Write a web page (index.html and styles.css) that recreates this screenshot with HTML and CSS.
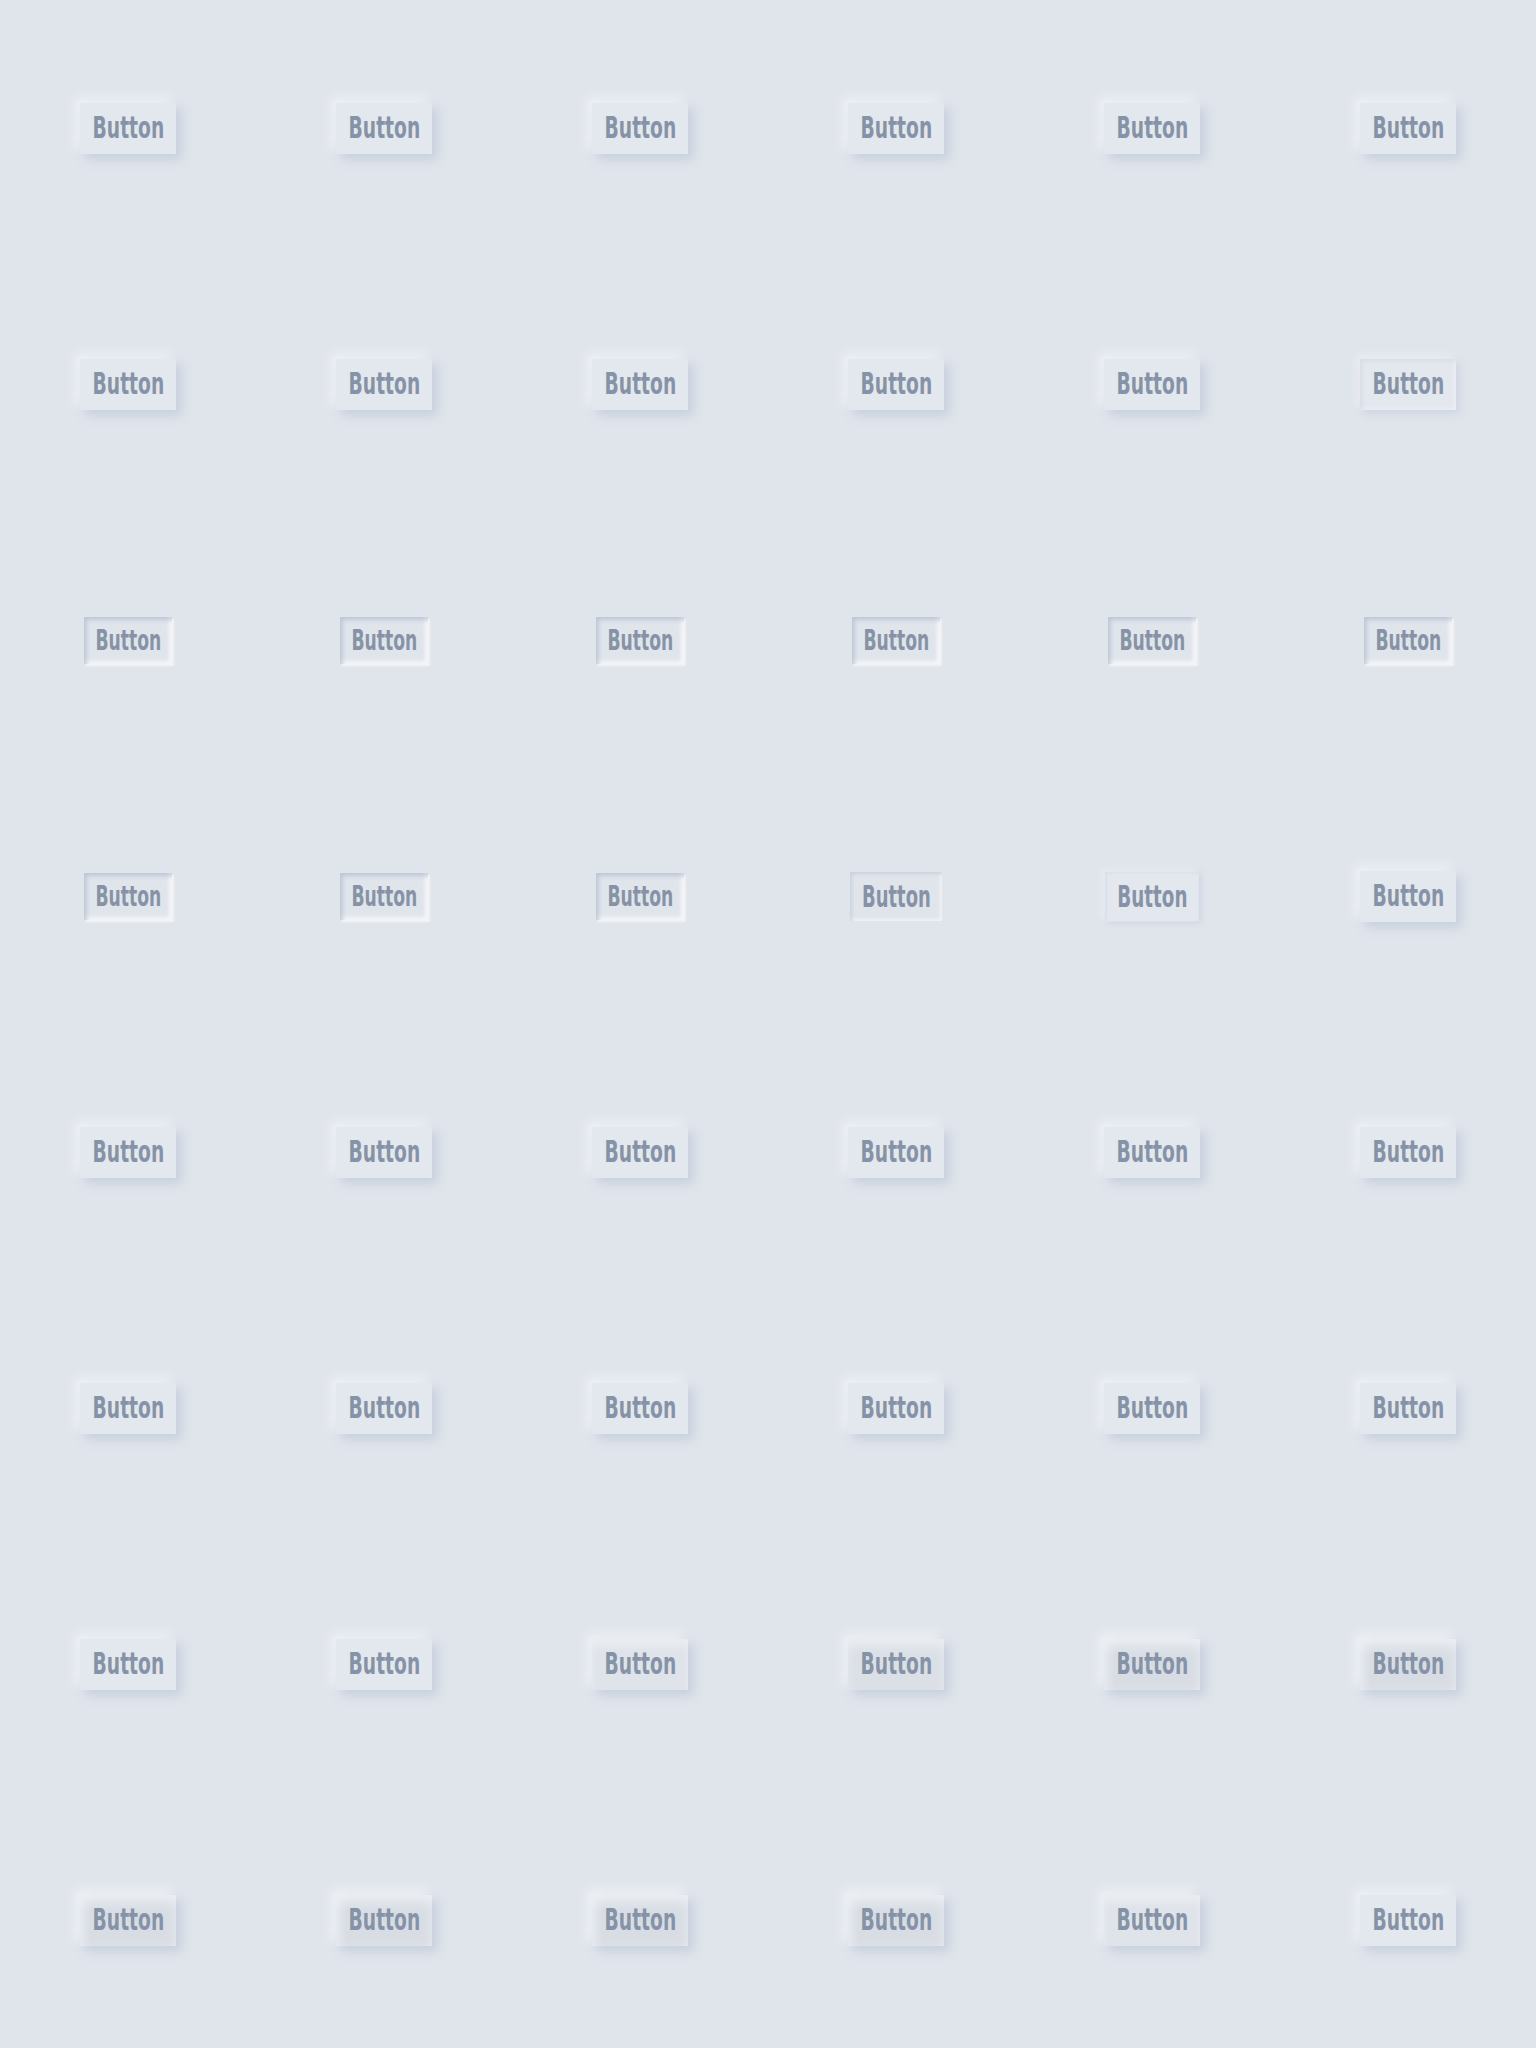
FILE: index.html
```html
<!DOCTYPE html>
<html>
<head>
<meta charset="utf-8">
<link rel="stylesheet" href="styles.css">
</head>
<body>
<div class="grid">
  <div class="cell"><span class="btn raised"><span class="label">Button</span></span></div>
  <div class="cell"><span class="btn raised"><span class="label">Button</span></span></div>
  <div class="cell"><span class="btn raised"><span class="label">Button</span></span></div>
  <div class="cell"><span class="btn raised"><span class="label">Button</span></span></div>
  <div class="cell"><span class="btn raised"><span class="label">Button</span></span></div>
  <div class="cell"><span class="btn raised"><span class="label">Button</span></span></div>

  <div class="cell"><span class="btn raised"><span class="label">Button</span></span></div>
  <div class="cell"><span class="btn raised"><span class="label">Button</span></span></div>
  <div class="cell"><span class="btn raised"><span class="label">Button</span></span></div>
  <div class="cell"><span class="btn raised"><span class="label">Button</span></span></div>
  <div class="cell"><span class="btn raised"><span class="label">Button</span></span></div>
  <div class="cell"><span class="btn mid"><span class="label">Button</span></span></div>

  <div class="cell"><span class="btn pressed"><span class="label">Button</span></span></div>
  <div class="cell"><span class="btn pressed"><span class="label">Button</span></span></div>
  <div class="cell"><span class="btn pressed"><span class="label">Button</span></span></div>
  <div class="cell"><span class="btn pressed"><span class="label">Button</span></span></div>
  <div class="cell"><span class="btn pressed"><span class="label">Button</span></span></div>
  <div class="cell"><span class="btn pressed"><span class="label">Button</span></span></div>

  <div class="cell"><span class="btn pressed"><span class="label">Button</span></span></div>
  <div class="cell"><span class="btn pressed"><span class="label">Button</span></span></div>
  <div class="cell"><span class="btn pressed"><span class="label">Button</span></span></div>
  <div class="cell"><span class="btn release1"><span class="label">Button</span></span></div>
  <div class="cell"><span class="btn release2"><span class="label">Button</span></span></div>
  <div class="cell"><span class="btn raised"><span class="label">Button</span></span></div>

  <div class="cell"><span class="btn raised"><span class="label">Button</span></span></div>
  <div class="cell"><span class="btn raised"><span class="label">Button</span></span></div>
  <div class="cell"><span class="btn raised"><span class="label">Button</span></span></div>
  <div class="cell"><span class="btn raised"><span class="label">Button</span></span></div>
  <div class="cell"><span class="btn raised"><span class="label">Button</span></span></div>
  <div class="cell"><span class="btn raised"><span class="label">Button</span></span></div>

  <div class="cell"><span class="btn raised"><span class="label">Button</span></span></div>
  <div class="cell"><span class="btn raised"><span class="label">Button</span></span></div>
  <div class="cell"><span class="btn raised"><span class="label">Button</span></span></div>
  <div class="cell"><span class="btn raised"><span class="label">Button</span></span></div>
  <div class="cell"><span class="btn raised"><span class="label">Button</span></span></div>
  <div class="cell"><span class="btn raised"><span class="label">Button</span></span></div>

  <div class="cell"><span class="btn raised"><span class="label">Button</span></span></div>
  <div class="cell"><span class="btn raised"><span class="label">Button</span></span></div>
  <div class="cell"><span class="btn glow1"><span class="label">Button</span></span></div>
  <div class="cell"><span class="btn glow2"><span class="label">Button</span></span></div>
  <div class="cell"><span class="btn glow3"><span class="label">Button</span></span></div>
  <div class="cell"><span class="btn glow3"><span class="label">Button</span></span></div>

  <div class="cell"><span class="btn glow3"><span class="label">Button</span></span></div>
  <div class="cell"><span class="btn glow3"><span class="label">Button</span></span></div>
  <div class="cell"><span class="btn glow3"><span class="label">Button</span></span></div>
  <div class="cell"><span class="btn glow3"><span class="label">Button</span></span></div>
  <div class="cell"><span class="btn glow1"><span class="label">Button</span></span></div>
  <div class="cell"><span class="btn raised"><span class="label">Button</span></span></div>
</div>
</body>
</html>
```

FILE: styles.css
```css
html, body {
  margin: 0;
  padding: 0;
  background: #e0e5ec;
}

.grid {
  display: grid;
  grid-template-columns: repeat(6, 256px);
  grid-template-rows: repeat(8, 256px);
  width: 1536px;
  height: 2048px;
}

.cell {
  display: flex;
  align-items: center;
  justify-content: center;
}

.btn {
  display: flex;
  align-items: center;
  justify-content: center;
  box-sizing: border-box;
  width: 96px;
  height: 51px;
  background: #e3e7ee;
}

.label {
  display: inline-block;
  font-family: "DejaVu Sans Condensed", "DejaVu Sans", sans-serif;
  font-weight: bold;
  font-size: 31px;
  line-height: 1;
  color: #8693a6;
  white-space: nowrap;
  transform: scaleX(0.67);
  margin-top: -1px;
}

.raised {
  box-shadow: 5px 5px 10px rgba(163, 177, 198, 0.45), -5px -5px 10px rgba(255, 255, 255, 0.55);
}

.mid {
  box-shadow: 3px 3px 8px rgba(163, 177, 198, 0.35), -3px -3px 8px rgba(255, 255, 255, 0.5),
    inset 2px 2px 4px rgba(163, 177, 198, 0.2), inset -2px -2px 4px rgba(255, 255, 255, 0.4);
}

.pressed {
  transform: scale(0.92);
  background: #e0e5ec;
  box-shadow: inset 3px 3px 5px rgba(163, 177, 198, 0.6), inset -3px -3px 5px rgba(255, 255, 255, 0.8),
    2px 2px 2px rgba(255, 255, 255, 0.6);
}

.release1 {
  transform: scale(0.96);
  background: #e0e5ec;
  box-shadow: inset 2px 2px 4px rgba(163, 177, 198, 0.4), inset -2px -2px 4px rgba(255, 255, 255, 0.6);
}

.release2 {
  transform: scale(0.98);
  box-shadow: 2px 2px 6px rgba(163, 177, 198, 0.35), -2px -2px 6px rgba(255, 255, 255, 0.5),
    inset 1px 1px 3px rgba(163, 177, 198, 0.2);
}

.glow1 {
  background: #dfe3ea;
  box-shadow: 5px 5px 10px rgba(163, 177, 198, 0.45), -5px -5px 10px rgba(255, 255, 255, 0.55),
    inset 0 8px 10px rgba(255, 255, 255, 0.35);
}

.glow2 {
  background: #dbe0e7;
  box-shadow: 5px 5px 10px rgba(163, 177, 198, 0.45), -5px -5px 10px rgba(255, 255, 255, 0.55),
    inset 0 8px 10px rgba(255, 255, 255, 0.4);
}

.glow3 {
  background: #d8dde5;
  box-shadow: 5px 5px 10px rgba(163, 177, 198, 0.45), -5px -5px 10px rgba(255, 255, 255, 0.55),
    inset 0 8px 12px rgba(255, 255, 255, 0.45), inset 6px 0 10px rgba(255, 255, 255, 0.2);
}
```
